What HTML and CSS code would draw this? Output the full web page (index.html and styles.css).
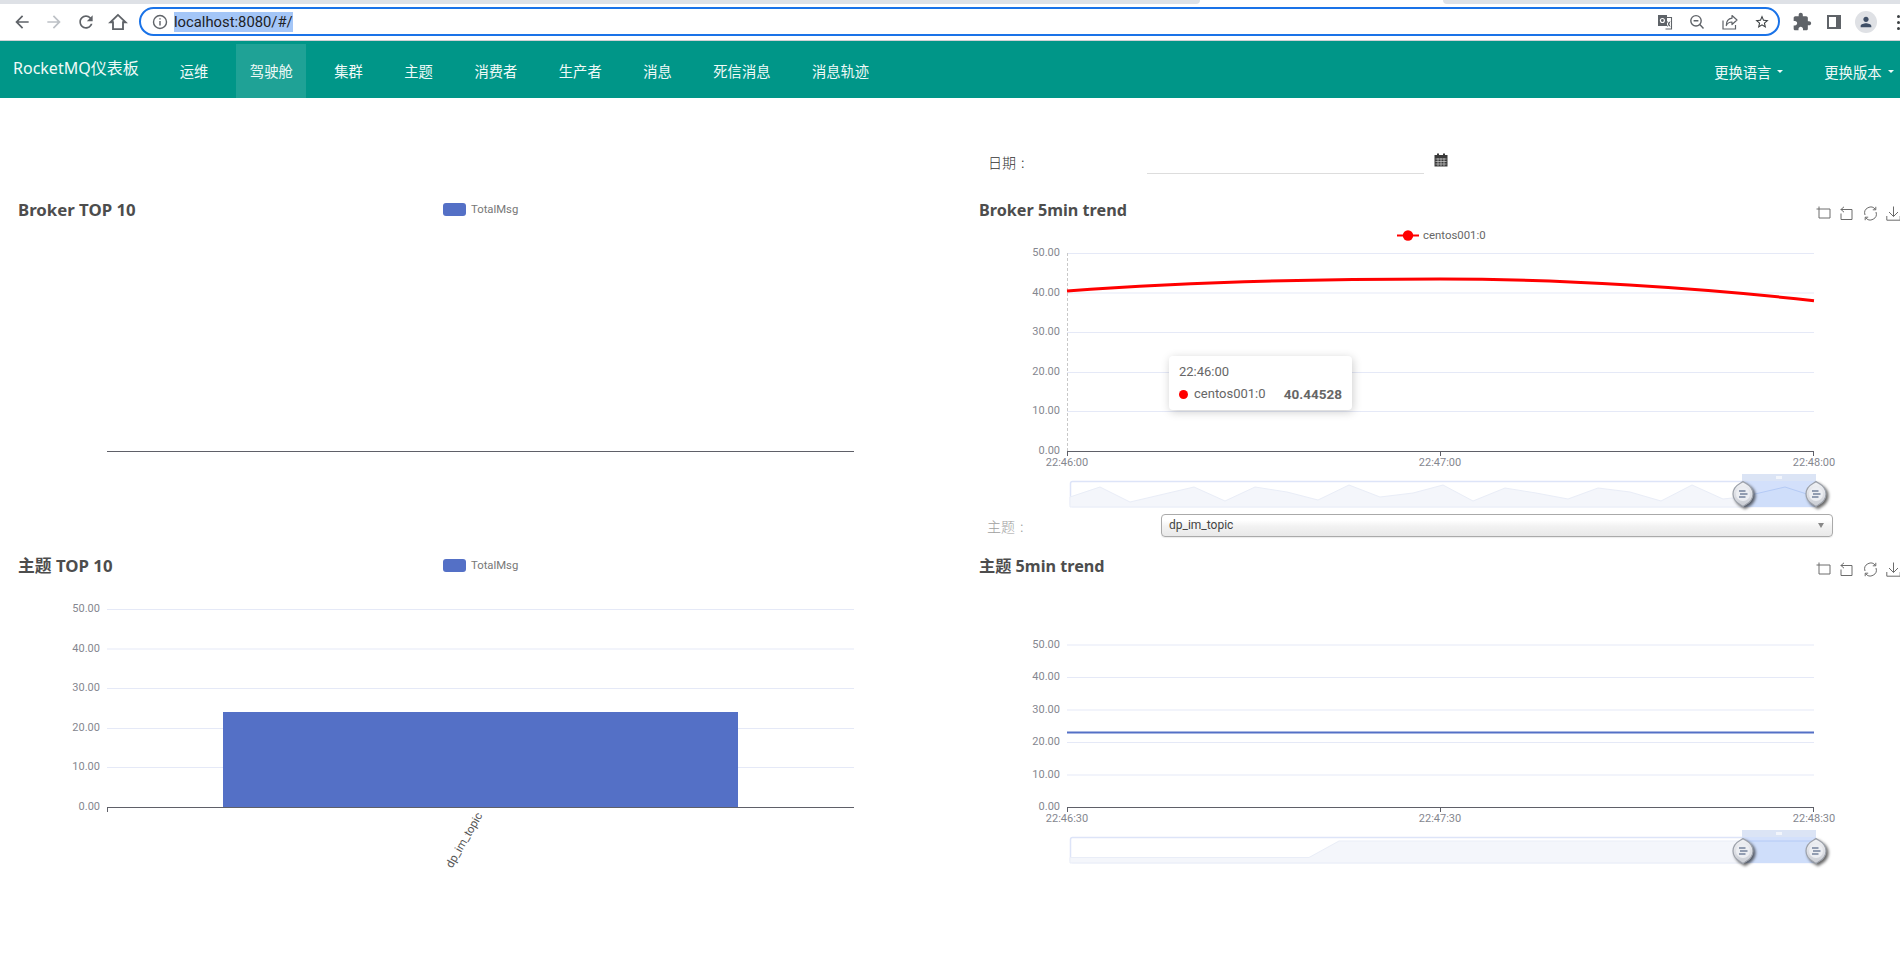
FILE: index.html
```html
<!DOCTYPE html>
<html lang="zh">
<head>
<meta charset="utf-8">
<title>RocketMQ</title>
<link rel="stylesheet" href="styles.css">
</head>
<body>
<svg class="defs" width="0" height="0" aria-hidden="true">
  <defs>
    <linearGradient id="hg" x1="0" y1="0" x2="0" y2="1">
      <stop offset="0" stop-color="#f2f3f6"/>
      <stop offset="1" stop-color="#c9ccd3"/>
    </linearGradient>
    <g id="handle">
      <path d="M0 -12.500 C2 -10.500 10 -9 10 0 C10 9 2 10.500 0 12.500 C-2 10.500 -10 9 -10 0 C-10 -9 -2 -10.500 0 -12.500Z" fill="url(#hg)" stroke="#9ca1aa" stroke-width="1.200"/>
      <circle r="7" fill="#eceef2"/>
      <path d="M-4 -3H2.500M-3 0H4.500M-4 3H2.500" fill="none" stroke="#74839c" stroke-width="1.500"/>
    </g>
  </defs>
</svg>

<header class="browser">
  <div class="tabstrip"><div class="strip-a"></div><div class="strip-b"></div></div>
  <div class="toolbar">
    <span class="tbtn"><svg viewBox="0 0 24 24" class="ic"><path d="M20 11H7.830l5.590-5.590L12 4l-8 8 8 8 1.410-1.410L7.830 13H20v-2z"/></svg></span>
    <span class="tbtn"><svg viewBox="0 0 24 24" class="ic ic-off"><path d="M12 4l-1.410 1.410L16.170 11H4v2h12.170l-5.580 5.590L12 20l8-8z"/></svg></span>
    <span class="tbtn"><svg viewBox="0 0 24 24" class="ic"><path d="M17.650 6.350C16.200 4.900 14.210 4 12 4c-4.420 0-7.990 3.580-7.990 8s3.570 8 7.990 8c3.730 0 6.840-2.550 7.730-6h-2.080c-.820 2.330-3.040 4-5.650 4-3.310 0-6-2.690-6-6s2.690-6 6-6c1.660 0 3.140.690 4.220 1.780L13 11h7V4l-2.350 2.350z"/></svg></span>
    <span class="tbtn"><svg viewBox="0 0 24 24" class="ic"><path class="ic-line" d="M12 3.500L2.800 12.300H6V20.500H18V12.300H21.200Z"/></svg></span>
    <div class="omnibox">
      <svg viewBox="0 0 16 16" class="info"><circle cx="8" cy="8" r="6.500" fill="none" stroke="#5f6368" stroke-width="1.400"/><path d="M7.300 7H8.700V11.500H7.300ZM7.300 4.200H8.700V5.600H7.300Z" fill="#5f6368"/></svg>
      <span class="url">localhost:8080/#/</span>
      <div class="omni-icons">
        <svg viewBox="0 0 16 16" class="oi"><path d="M7 3.500H14.500V15H8.500" fill="none" stroke="#5f6368" stroke-width="1.100"/><rect x="1" y="1" width="9" height="11" fill="#5f6368"/><circle cx="5.400" cy="6.500" r="2" fill="none" stroke="#fff" stroke-width="1.100"/><path d="M10.500 7.500L13 12.500M13 7.500L10.500 12.500" stroke="#5f6368" stroke-width="1"/></svg>
        <svg viewBox="0 0 16 16" class="oi"><circle cx="7" cy="6.800" r="5.200" fill="none" stroke="#5f6368" stroke-width="1.400"/><path d="M4.600 6.800H9.400M10.800 10.600L14.500 14.500" stroke="#5f6368" stroke-width="1.400" fill="none"/></svg>
        <svg viewBox="0 0 16 16" class="oi"><path d="M1 6.500V15H13.500V11" fill="none" stroke="#5f6368" stroke-width="1.200"/><path d="M10 1.500L15 6L10 10.500V8C7.500 8 5.500 9 4.300 11.500C4.300 7.500 6.500 4.700 10 4.200Z" fill="#fff" stroke="#5f6368" stroke-width="1.200" stroke-linejoin="round"/></svg>
        <svg viewBox="0 0 24 24" class="oi"><path fill="#3c4043" d="M22 9.240l-7.190-.620L12 2 9.190 8.630 2 9.240l5.460 4.730L5.820 21 12 17.270 18.180 21l-1.630-7.030L22 9.240zM12 15.400l-3.760 2.270 1-4.280-3.320-2.880 4.380-.380L12 6.100l1.710 4.040 4.380.380-3.320 2.880 1 4.280L12 15.400z"/></svg>
      </div>
    </div>
    <span class="tbtn tbtn-first"><svg viewBox="0 0 24 24" class="ic"><path d="M20.500 11H19V7c0-1.100-.900-2-2-2h-4V3.500C13 2.120 11.880 1 10.500 1S8 2.120 8 3.500V5H4c-1.100 0-1.990.900-1.990 2v3.800H3.500c1.490 0 2.700 1.210 2.700 2.700s-1.210 2.700-2.700 2.700H2V20c0 1.100.900 2 2 2h3.800v-1.500c0-1.490 1.210-2.700 2.700-2.700 1.490 0 2.700 1.210 2.700 2.700V22H17c1.100 0 2-.900 2-2v-4h1.500c1.380 0 2.500-1.120 2.500-2.500S21.880 11 20.500 11z"/></svg></span>
    <span class="tbtn"><span class="sidepanel"></span></span>
    <span class="tbtn"><span class="avatar"><svg viewBox="0 0 24 24" class="ic ic-person"><path d="M12 12c2.210 0 4-1.790 4-4s-1.790-4-4-4-4 1.790-4 4 1.790 4 4 4zm0 2c-2.670 0-8 1.340-8 4v2h16v-2c0-2.660-5.330-4-8-4z"/></svg></span></span>
    <span class="tbtn"><span class="kebab"><i></i><i></i><i></i></span></span>
  </div>
</header>

<nav class="topnav">
  <a class="brand">RocketMQ仪表板</a>
  <ul class="navlist">
    <li class="navitem">运维</li>
    <li class="navitem is-active">驾驶舱</li>
    <li class="navitem">集群</li>
    <li class="navitem">主题</li>
    <li class="navitem">消费者</li>
    <li class="navitem">生产者</li>
    <li class="navitem">消息</li>
    <li class="navitem">死信消息</li>
    <li class="navitem">消息轨迹</li>
  </ul>
  <ul class="navright">
    <li class="dropitem">更换语言<span class="caret"></span></li>
    <li class="dropitem">更换版本<span class="caret"></span></li>
  </ul>
</nav>

<main class="dash">
  <div class="cell-spacer"></div>
  <div class="daterow">
    <label class="date-label">日期 :</label>
    <input class="date-input" type="text">
    <svg viewBox="0 0 14 14" class="cal"><path d="M0.500 2H13.500V13.500H0.500Z" fill="#3a3a3a"/><path d="M3 0.500H5V3H3ZM9 0.500H11V3H9Z" fill="#3a3a3a"/><path d="M1.500 6H12.500M1.500 8.500H12.500M1.500 11H12.500M4 5V13M7 5V13M10 5V13" stroke="#cfcfcf" stroke-width=".7"/></svg>
  </div>

  <section class="panel">
    <div class="head">
      <h3 class="title title-fixed">Broker TOP 10</h3>
      <span class="legend"><i class="swatch"></i>TotalMsg</span>
    </div>
    <svg class="chart" width="960" height="282" viewBox="0 230 960 282">
      <line class="axis" x1="107" y1="451.500" x2="854" y2="451.500"/>
    </svg>
  </section>

  <section class="panel panel-r">
    <div class="head">
      <h3 class="title">Broker 5min trend</h3>
      <div class="toolbox">
        <svg viewBox="0 0 15 15" class="tool"><path d="M3 0.500V12H14V3H0.500"/></svg>
        <svg viewBox="0 0 15 15" class="tool"><path d="M1.500 3.500H13V13.500H2V7.500M5 0.800L2 3.500L5 6.200"/></svg>
        <svg viewBox="0 0 15 15" class="tool"><path d="M2 9A6 6 0 0 1 12.500 3.500M13 6A6 6 0 0 1 2.500 11.500M12.800 0.800V3.800H9.800M2.200 14.200V11.200H5.200"/></svg>
        <svg viewBox="0 0 15 15" class="tool"><path d="M7.500 0.500V10.500M3 6L7.500 10.500L12 6M0.800 10V14.200H14.200V10"/></svg>
      </div>
    </div>
    <svg class="chart chart-up" width="940" height="297" viewBox="960 215 940 297">
      <g class="legend-line"><line x1="1397" y1="235.500" x2="1419" y2="235.500"/><circle cx="1408" cy="235.500" r="5.200"/></g>
      <text class="lbl lbl-legend" x="1423" y="239">centos001:0</text>
      <line class="grid" x1="1067" y1="253.500" x2="1814" y2="253.500"/>
      <line class="grid" x1="1067" y1="293" x2="1814" y2="293"/>
      <line class="grid" x1="1067" y1="332.500" x2="1814" y2="332.500"/>
      <line class="grid" x1="1067" y1="372.500" x2="1814" y2="372.500"/>
      <line class="grid" x1="1067" y1="411.500" x2="1814" y2="411.500"/>
      <text class="lbl end" x="1060" y="256">50.00</text>
      <text class="lbl end" x="1060" y="295.500">40.00</text>
      <text class="lbl end" x="1060" y="335">30.00</text>
      <text class="lbl end" x="1060" y="375">20.00</text>
      <text class="lbl end" x="1060" y="414">10.00</text>
      <text class="lbl end" x="1060" y="454">0.00</text>
      <line class="pointer" x1="1067.500" y1="253" x2="1067.500" y2="451"/>
      <path class="curve-red" d="M1067 291C1200 281 1350 279 1440 279C1560 279 1700 288 1814 300.700"/>
      <line class="axis" x1="1067" y1="451.500" x2="1814" y2="451.500"/>
      <path class="axis" d="M1067.500 451V456M1440.500 451V456M1813.500 451V456"/>
      <text class="lbl mid" x="1067" y="466">22:46:00</text>
      <text class="lbl mid" x="1440" y="466">22:47:00</text>
      <text class="lbl mid" x="1814" y="466">22:48:00</text>
      <rect class="dz-frame" x="1070.500" y="481.500" width="745" height="25" rx="2"/>
      <polygon class="dz-area" points="1070,507 1070,497 1100,487 1130,502 1194,487 1225,501 1255,487 1287,492 1318,500 1349,485 1380,497 1413,493 1443,485 1473,501 1505,488 1536,493 1568,499 1598,488 1630,492 1661,501 1692,485 1723,499 1742,497 1742,507"/>
      <rect class="dz-sel" x="1742" y="481" width="74" height="26"/>
      <polygon class="dz-sel-area" points="1742,507 1742,497 1785,487 1816,497 1816,507"/>
      <polyline class="dz-sel-line" points="1742,497 1785,487 1816,497"/>
      <rect class="dz-top" x="1742" y="474" width="74" height="7"/>
      <rect class="dz-grip" x="1776" y="476" width="6" height="3"/>
      <use class="dz-handle" href="#handle" x="1743" y="494"/>
      <use class="dz-handle" href="#handle" x="1816" y="494"/>
    </svg>
    <div class="tooltip">
      <div class="tt-time">22:46:00</div>
      <div class="tt-row"><i class="tt-dot"></i><span class="tt-name">centos001:0</span><b class="tt-val">40.44528</b></div>
    </div>
  </section>

  <div class="cell-spacer"></div>
  <div class="selectrow">
    <label class="select-label">主题 :</label>
    <div class="select-box"><span>dp_im_topic</span><i class="select-arrow"></i></div>
  </div>

  <section class="panel">
    <div class="head">
      <h3 class="title title-fixed">主题 TOP 10</h3>
      <span class="legend"><i class="swatch"></i>TotalMsg</span>
    </div>
    <svg class="chart" width="960" height="368" viewBox="0 586 960 368">
      <line class="grid" x1="107" y1="609.500" x2="854" y2="609.500"/>
      <line class="grid" x1="107" y1="649" x2="854" y2="649"/>
      <line class="grid" x1="107" y1="688.500" x2="854" y2="688.500"/>
      <line class="grid" x1="107" y1="728.500" x2="854" y2="728.500"/>
      <line class="grid" x1="107" y1="767.500" x2="854" y2="767.500"/>
      <text class="lbl end" x="100" y="612">50.00</text>
      <text class="lbl end" x="100" y="651.500">40.00</text>
      <text class="lbl end" x="100" y="691">30.00</text>
      <text class="lbl end" x="100" y="731">20.00</text>
      <text class="lbl end" x="100" y="770">10.00</text>
      <text class="lbl end" x="100" y="810">0.00</text>
      <rect class="bar" x="223" y="712" width="515" height="95"/>
      <line class="axis" x1="107" y1="807.500" x2="854" y2="807.500"/>
      <path class="axis" d="M107.500 807V812"/>
      <text class="lbl lbl-cat mid" transform="rotate(-60 464 840)" x="464" y="844">dp_im_topic</text>
    </svg>
  </section>

  <section class="panel panel-r">
    <div class="head">
      <h3 class="title">主题 5min trend</h3>
      <div class="toolbox">
        <svg viewBox="0 0 15 15" class="tool"><path d="M3 0.500V12H14V3H0.500"/></svg>
        <svg viewBox="0 0 15 15" class="tool"><path d="M1.500 3.500H13V13.500H2V7.500M5 0.800L2 3.500L5 6.200"/></svg>
        <svg viewBox="0 0 15 15" class="tool"><path d="M2 9A6 6 0 0 1 12.500 3.500M13 6A6 6 0 0 1 2.500 11.500M12.800 0.800V3.800H9.800M2.200 14.200V11.200H5.200"/></svg>
        <svg viewBox="0 0 15 15" class="tool"><path d="M7.500 0.500V10.500M3 6L7.500 10.500L12 6M0.800 10V14.200H14.200V10"/></svg>
      </div>
    </div>
    <svg class="chart" width="940" height="368" viewBox="960 586 940 368">
      <line class="grid" x1="1067" y1="645" x2="1814" y2="645"/>
      <line class="grid" x1="1067" y1="677.500" x2="1814" y2="677.500"/>
      <line class="grid" x1="1067" y1="710" x2="1814" y2="710"/>
      <line class="grid" x1="1067" y1="742.500" x2="1814" y2="742.500"/>
      <line class="grid" x1="1067" y1="775" x2="1814" y2="775"/>
      <text class="lbl end" x="1060" y="648">50.00</text>
      <text class="lbl end" x="1060" y="680">40.00</text>
      <text class="lbl end" x="1060" y="712.500">30.00</text>
      <text class="lbl end" x="1060" y="745">20.00</text>
      <text class="lbl end" x="1060" y="777.500">10.00</text>
      <text class="lbl end" x="1060" y="810">0.00</text>
      <line class="curve-blue" x1="1067" y1="732.500" x2="1814" y2="732.500"/>
      <line class="axis" x1="1067" y1="807.500" x2="1814" y2="807.500"/>
      <path class="axis" d="M1067.500 807V812M1440.500 807V812M1813.500 807V812"/>
      <text class="lbl mid" x="1067" y="822">22:46:30</text>
      <text class="lbl mid" x="1440" y="822">22:47:30</text>
      <text class="lbl mid" x="1814" y="822">22:48:30</text>
      <rect class="dz-frame" x="1070.500" y="837.500" width="745" height="25" rx="2"/>
      <polygon class="dz-area" points="1070,863 1070,857.500 1309,857.500 1339,841 1742,841 1742,863"/>
      <rect class="dz-sel" x="1742" y="837" width="74" height="26"/>
      <polygon class="dz-sel-area" points="1742,863 1742,841 1816,841 1816,863"/>
      <polyline class="dz-sel-line" points="1742,841 1816,841"/>
      <rect class="dz-top" x="1742" y="830" width="74" height="7"/>
      <rect class="dz-grip" x="1776" y="832" width="6" height="3"/>
      <use class="dz-handle" href="#handle" x="1743" y="851"/>
      <use class="dz-handle" href="#handle" x="1816" y="851"/>
    </svg>
  </section>
</main>
</body>
</html>
```

FILE: styles.css
```css
* { box-sizing: border-box; }
html, body { margin: 0; padding: 0; height: 954px; overflow: hidden; background: #fff; }
body { width: 1900px; font-family: "Noto Sans", "Noto Sans CJK SC", sans-serif; color: #333; }
.defs { position: absolute; }

/* browser chrome */
.browser { height: 41px; background: #fff; border-bottom: 1px solid #d0d2d6; overflow: hidden; }
.tabstrip { height: 4px; display: flex; background: #fff; }
.strip-a { width: 1200px; background: #dee1e6; border-bottom-right-radius: 4px; }
.strip-b { flex: 1; margin-left: 243px; background: #dee1e6; border-bottom-left-radius: 4px; }
.toolbar { height: 36px; display: flex; align-items: flex-start; padding: 3px 0 0 6px; width: 1914px; }
.tbtn { width: 32px; height: 30px; flex: none; display: flex; align-items: center; justify-content: center; }
.tbtn-first { margin-left: 6px; }
.ic { width: 20px; height: 20px; fill: #5f6368; display: block; }
.ic-off { fill: #bdc1c6; }
.ic-line { fill: none; stroke: #5f6368; stroke-width: 2.2; stroke-linejoin: miter; }
.omnibox { width: 1641px; height: 29px; margin-left: 5px; flex: none; border: 2px solid #1a73e8; border-radius: 15px; display: flex; align-items: center; padding-left: 11px; background: #fff; }
.info { width: 16px; height: 16px; flex: none; }
.url { margin-left: 6px; font-family: "Roboto", sans-serif; font-size: 14.800px; line-height: 20px; color: #202124; background: #a4c6f7; }
.omni-icons { margin-left: auto; display: flex; gap: 16.500px; padding-right: 8px; align-items: center; }
.oi { width: 16px; height: 16px; display: block; }
.sidepanel { width: 14px; height: 14px; border: 2px solid #5f6368; border-right-width: 5px; display: block; background: #fff; }
.avatar { width: 22px; height: 22px; border-radius: 50%; background: #dfe1e5; display: flex; align-items: center; justify-content: center; }
.ic-person { width: 16px; height: 16px; fill: #3f4f66; }
.kebab { display: flex; flex-direction: column; gap: 3px; }
.kebab i { width: 3px; height: 3px; border-radius: 50%; background: #3c4043; display: block; }

/* top nav */
.topnav { height: 57px; background: #009688; display: flex; align-items: flex-end; color: #f0faf8; }
.brand { width: 166px; padding-left: 13px; font-size: 16px; height: 54px; line-height: 48px; }
.navlist, .navright { list-style: none; margin: 0; padding: 0; display: flex; }
.navitem { height: 54px; line-height: 53px; padding: 0 13.750px; margin-right: 14px; font-size: 14.300px; font-family: "Noto Sans CJK SC", sans-serif; }
.is-active { background: rgba(255,255,255,.12); }
.navright { margin-left: auto; }
.dropitem { height: 54px; line-height: 53px; font-size: 14.300px; font-family: "Noto Sans CJK SC", sans-serif; margin-right: 6.500px; margin-left: 34.500px; display: flex; align-items: center; }
.caret { width: 0; height: 0; margin-left: 6px; border: 3px solid transparent; border-top: 3.500px solid #f0faf8; border-bottom: 0; }

/* dashboard */
.dash { display: grid; grid-template-columns: 960px 940px; grid-template-rows: 92px 322px 34px 1fr; height: 856px; }
.panel { position: relative; min-width: 0; }
.head { height: 40px; display: flex; align-items: center; padding-left: 19px; }
.title { margin: 0; font-size: 16.200px; font-weight: 700; color: #4d4d4d; font-family: "Noto Sans", "Noto Sans CJK SC", sans-serif; line-height: 40px; white-space: nowrap; }
.title-fixed { width: 424px; flex: none; font-size: 16.800px; margin-left: -1px; margin-right: 1px; }
.legend { display: flex; align-items: center; font: 11.300px "Roboto", sans-serif; color: #777; margin-top: -1px; }
.swatch { width: 23px; height: 13px; border-radius: 3px; background: #5470c6; margin-right: 5px; display: block; }
.toolbox { margin-left: auto; margin-top: 6px; margin-right: -1px; display: flex; gap: 8.500px; }
.tool { width: 15px; height: 15px; flex: none; fill: none; stroke: #6c6c6c; stroke-width: 1; display: block; }
.chart { display: block; }
.chart-up { margin-top: -15px; }

.daterow { display: flex; align-items: center; padding: 52px 0 0 28px; height: 76px; }
.date-label { width: 159px; font-size: 14px; font-family: "Noto Sans CJK SC", sans-serif; font-weight: 300; color: #333; word-spacing: 2px; }
.date-input { width: 277px; height: 24px; border: 0; border-bottom: 1px solid #ddd; outline: 0; background: transparent; padding: 0; }
.cal { width: 14px; height: 14px; margin: -5px 0 0 10px; flex: none; }

.selectrow { display: flex; align-items: center; padding: 2px 0 0 27px; height: 25px; }
.select-label { width: 174px; font-size: 14px; font-family: "Noto Sans CJK SC", sans-serif; font-weight: 300; color: #a0a0a0; word-spacing: 2px; }
.select-box { width: 672px; height: 23px; border: 1px solid #aaa; border-radius: 4px; background: linear-gradient(#fff 25%, #f2f2f2 55%, #e9e9e9); box-shadow: 0 1px 1px rgba(0,0,0,.08); display: flex; align-items: center; justify-content: space-between; padding: 0 8px 1px 7px; font: 12px "Roboto", sans-serif; color: #444; }
.select-arrow { width: 0; height: 0; border: 3.500px solid transparent; border-top: 5px solid #888; border-bottom: 0; display: block; margin-top: 1px; }

/* chart parts */
.grid { stroke: #e5e9f7; stroke-width: 1; }
.axis { stroke: #5f6068; stroke-width: 1; fill: none; }
.lbl { font: 11px "Roboto", sans-serif; fill: #85878f; }
.lbl-legend { font-size: 11.400px; fill: #666; }
.lbl-cat { font-size: 11.500px; fill: #555; }
.end { text-anchor: end; }
.mid { text-anchor: middle; }
.bar { fill: #5470c6; }
.pointer { stroke: #c8c8c8; stroke-dasharray: 3 2; }
.curve-red { fill: none; stroke: #f00; stroke-width: 3; }
.curve-blue { stroke: #5470c6; stroke-width: 2; }
.legend-line line { stroke: #f00; stroke-width: 2; }
.legend-line circle { fill: #f00; }
.dz-frame { fill: #fff; stroke: #dde4f8; stroke-width: 1.500; }
.dz-area { fill: #f4f6fb; stroke: #e9edf7; stroke-width: 1; }
.dz-sel { fill: #d3e0fb; }
.dz-sel-area { fill: #cfdefa; }
.dz-sel-line { fill: none; stroke: #b4caf5; }
.dz-top { fill: #dbe4f5; }
.dz-grip { fill: #f2f5fb; }
.dz-handle { filter: drop-shadow(2px 2px 1.500px rgba(0,0,0,.6)); }

/* tooltip */
.tooltip { position: absolute; left: 209px; top: 166px; width: 183px; height: 54px; background: #fff; border-radius: 4px; box-shadow: 1px 2px 10px rgba(0,0,0,.2); padding: 6px 10px; font: 13px/20px "Roboto", sans-serif; color: #666; }
.tt-time { height: 20px; }
.tt-row { display: flex; align-items: center; margin-top: 2px; }
.tt-dot { width: 9px; height: 9px; border-radius: 50%; background: #f00; margin-right: 6px; flex: none; }
.tt-val { margin-left: auto; font-weight: 700; font-size: 13.500px; }
```
